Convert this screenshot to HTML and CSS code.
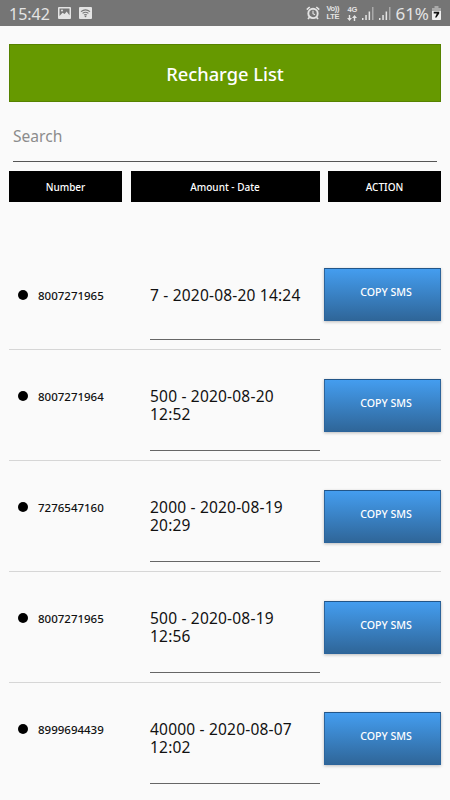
FILE: index.html
```html
<!DOCTYPE html>
<html lang="en">
<head>
  <meta charset="utf-8">
  <title>Recharge List</title>
  <link rel="stylesheet" href="styles.css">
</head>
<body>

<div class="status-bar">
  <span class="clock">15:42</span>
  <svg class="icon-picture" width="13" height="12" viewBox="0 0 13 12">
    <rect width="13" height="12" rx="1" fill="#e4e4e4"/>
    <path d="M1.5 1.5h10v6.8L8.6 4.6 6.7 7.1 4.5 5.7 1.5 9z" fill="#777"/>
    <circle cx="4" cy="3.6" r="1" fill="#e4e4e4"/>
  </svg>
  <svg class="icon-wifi" width="13" height="12" viewBox="0 0 13 12">
    <rect width="13" height="12" rx="1" fill="#e4e4e4"/>
    <path d="M2 4.6q4.5-3.6 9 0M3.6 6.4q2.9-2.3 5.8 0M5.1 8q1.4-1 2.8 0" fill="none" stroke="#777" stroke-width="1.2"/>
    <circle cx="6.5" cy="9.3" r=".9" fill="#777"/>
  </svg>
  <span class="spacer"></span>
  <svg class="icon-alarm" width="14" height="14" viewBox="0 0 14 14" fill="none" stroke="#e4e4e4">
    <circle cx="7" cy="7.4" r="4.7" stroke-width="1.9"/>
    <path d="M7 4.7v3l2 1" stroke-width="1.1"/>
    <path d="M.8 3.7L3.7 1M13.2 3.7L10.3 1M3.5 11.2L2 13M10.5 11.2L12 13" stroke-width="1.7"/>
  </svg>
  <span class="network volte"><span>Vo))</span><span>LTE</span></span>
  <span class="network mobile">
    <span>4G</span>
    <svg width="10" height="6" viewBox="0 0 10 6">
      <path d="M2.5 6L0 3h1.8V0h1.4v3H5zM7.5 0v0L10 3H8.2v3H6.8V3H5z" fill="#e4e4e4"/>
    </svg>
  </span>
  <svg class="icon-signal" width="12" height="13" viewBox="0 0 12 13">
    <path d="M0 11h1.5v2H0zM3.3 8h1.5v5H3.3zM6.6 4.5h1.5V13H6.6z" fill="#e4e4e4"/>
    <path d="M10 0h1.5v13H10z" fill="#aaa"/>
  </svg>
  <svg class="icon-signal" width="12" height="13" viewBox="0 0 12 13">
    <path d="M0 11h1.5v2H0zM3.3 8h1.5v5H3.3zM6.6 4.5h1.5V13H6.6z" fill="#e4e4e4"/>
    <path d="M10 0h1.5v13H10z" fill="#aaa"/>
  </svg>
  <span class="battery-level">61%</span>
  <svg class="icon-battery" width="9" height="14" viewBox="0 0 9 14">
    <path d="M2.5 0h4v2H9v3H0V2h2.5z" fill="#aaa"/>
    <path d="M0 5h9v8.2q0 .8-.8.8H.8Q0 14 0 13.2z" fill="#eee"/>
    <path d="M1.7 5.8h5.5v1.6l-2.700 4.100H3l1.800-3.900H1.7z" fill="#111"/>
  </svg>
</div>

<div class="container">
  <h1>Recharge List</h1>

  <div class="search">Search</div>

  <div class="list-head">
    <div>Number</div>
    <div>Amount - Date</div>
    <div>ACTION</div>
  </div>

  <div class="list">
    <div class="row">
      <div class="number">8007271965</div>
      <div class="amount">7 - 2020-08-20 14:24</div>
      <button>COPY SMS</button>
    </div>
    <div class="row">
      <div class="number">8007271964</div>
      <div class="amount">500 - 2020-08-20<br>12:52</div>
      <button>COPY SMS</button>
    </div>
    <div class="row">
      <div class="number">7276547160</div>
      <div class="amount">2000 - 2020-08-19<br>20:29</div>
      <button>COPY SMS</button>
    </div>
    <div class="row">
      <div class="number">8007271965</div>
      <div class="amount">500 - 2020-08-19<br>12:56</div>
      <button>COPY SMS</button>
    </div>
    <div class="row">
      <div class="number">8999694439</div>
      <div class="amount">40000 - 2020-08-07<br>12:02</div>
      <button>COPY SMS</button>
    </div>
  </div>
</div>

</body>
</html>
```

FILE: styles.css
```css
* {
  box-sizing: border-box;
}

body {
  margin: 0;
  height: 800px;
  overflow: hidden;
  background: #fafafa;
  color: #111;
  font-family: "Noto Sans", sans-serif;
}

.status-bar {
  display: flex;
  align-items: center;
  height: 26px;
  padding: 0 9px;
  background: #757575;
  color: #e4e4e4;
}

.status-bar svg {
  flex: none;
}

.clock {
  width: 49px;
  font-size: 16px;
  line-height: 26px;
  padding-top: 2px;
}

.icon-wifi {
  margin-left: 8px;
}

.spacer {
  flex: 1;
}

.network {
  display: flex;
  flex-direction: column;
  font-family: "Liberation Sans", sans-serif;
  font-size: 7.5px;
  font-weight: bold;
  line-height: 8px;
}

.volte {
  width: 14px;
  margin-left: 6px;
  letter-spacing: -.3px;
  white-space: nowrap;
}

.mobile {
  width: 10px;
  margin-left: 7px;
}

.mobile svg {
  margin-top: 1px;
}

.icon-signal {
  margin: 1px 0 0 5px;
}

.battery-level {
  margin: 2px 3px 0 4px;
  font-size: 17px;
  line-height: 24px;
}

.container {
  padding: 18px 9px 0;
}

h1 {
  height: 58px;
  margin: 0;
  border: 1px solid #568200;
  background: #690;
  color: #fff;
  font-size: 18.3px;
  font-weight: 500;
  line-height: 57px;
  text-align: center;
}

.search {
  height: 60px;
  margin: 0 4px 9px;
  padding-top: 22px;
  border-bottom: 1px solid #555;
  color: #8c8c8c;
  font-size: 15.6px;
  line-height: 24px;
}

.list-head {
  display: grid;
  grid-template-columns: 113px 189px 113px;
  justify-content: space-between;
  color: #fff;
  font-size: 10px;
  font-weight: 500;
  line-height: 32px;
  text-align: center;
}

.list-head div {
  height: 31px;
  background: #000;
}

.list {
  padding-top: 37px;
}

.row {
  display: grid;
  grid-template-columns: 141px 174px 117px;
  align-items: start;
  height: 111px;
  border-bottom: 1px solid #d6d6d6;
}

.row:last-child {
  border-bottom: 0;
}

.row .number {
  display: flex;
  align-items: center;
  height: 18px;
  margin-top: 37px;
  padding-left: 9px;
  font-size: 11.5px;
  font-weight: 500;
}

.row .number::before {
  content: "";
  width: 10px;
  height: 10px;
  margin-right: 10px;
  border-radius: 50%;
  background: #000;
}

.row .amount {
  width: 170px;
  height: 101px;
  padding-top: 37px;
  border-bottom: 1px solid #666;
  font-size: 15.5px;
  letter-spacing: .2px;
  line-height: 18px;
  white-space: nowrap;
}

/* one-line amount sits lower in its field */
.row:first-child .number {
  margin-top: 47px;
}

.row:first-child .amount {
  padding-top: 47px;
}

.row button {
  height: 53px;
  margin: 29px 0 0;
  padding: 0 0 5px 7px;
  border: 1px solid #2c649b;
  border-top-color: #258;
  background: linear-gradient(#449def, #2f6699);
  box-shadow: 0 1px 3px rgba(0, 0, 0, .25);
  color: #fff;
  font-family: inherit;
  font-size: 10.6px;
  font-weight: 500;
}
```
